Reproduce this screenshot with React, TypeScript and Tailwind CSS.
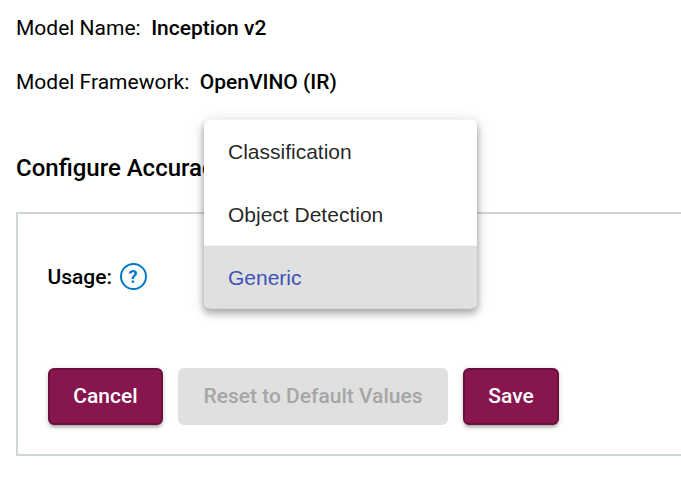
const options = ["Classification", "Object Detection", "Generic"];

function Detail({ label, value }: { label: string; value: string }) {
  return (
    <div className="flex h-[54px] items-center gap-[10.5px] whitespace-nowrap">
      <span>{label}</span>
      <span className="font-medium">{value}</span>
    </div>
  );
}

function UsageMenu() {
  return (
    <ul className="absolute left-[204px] top-[120px] w-[273px] [transform:translateY(-0.4px)_scale(1.0001)] overflow-hidden rounded-md bg-white font-['Liberation_Sans',sans-serif] text-[21px] text-black/87 shadow-[0_3px_6px_-1px_rgba(0,0,0,0.2),0_6px_7.5px_0_rgba(0,0,0,0.14),0_1.5px_15px_0_rgba(0,0,0,0.12)]">
      {options.map((option) => (
        <li
          key={option}
          className={
            option === "Generic"
              ? "flex h-[63px] items-center bg-[#e0e0e0] px-6 pt-px text-[#3f51b5]"
              : "flex h-[63px] items-center px-6 pt-px"
          }
        >
          {option}
        </li>
      ))}
    </ul>
  );
}

function PrimaryButton({ children, width }: { children: string; width: string }) {
  return (
    <button
      className={`${width} h-[57px] rounded-md border-2 border-[#6b0f3d] bg-[#87154e] font-medium text-white shadow-[0_4px_3px_-3px_rgba(0,0,0,0.2),0_3px_3px_0_rgba(0,0,0,0.14),0_1px_7px_0_rgba(0,0,0,0.12)]`}
    >
      {children}
    </button>
  );
}

export default function App() {
  return (
    <main className="relative h-[497px] w-full overflow-hidden bg-white pt-0.5 pl-4 font-[Roboto,sans-serif] text-[21px] text-black">
      <Detail label="Model Name:" value="Inception v2" />
      <Detail label="Model Framework:" value="OpenVINO (IR)" />
      <h1 className="mt-[42px] whitespace-nowrap text-2xl leading-8 font-medium">Configure Accuracy</h1>
      <section className="mt-7 h-[244px] border-2 border-r-0 border-[#d0d7d9] pl-[29.5px]">
        <div className="flex h-[125px] items-center gap-[7.5px]">
          <span className="pt-0.5 font-medium">Usage:</span>
          <span className="flex size-[27px] items-center justify-center rounded-full border-2 border-[#0079c8] text-lg leading-none font-bold text-[#0079c8]">
            ?
          </span>
        </div>
        <div className="mt-[29px] ml-[0.5px] flex gap-[15px]">
          <PrimaryButton width="w-[115px]">Cancel</PrimaryButton>
          <button disabled className="h-[57px] w-[270px] rounded-md bg-[#e0e0e0] font-medium text-[#a6a6a6]">
            Reset to Default Values
          </button>
          <PrimaryButton width="w-24">Save</PrimaryButton>
        </div>
      </section>
      <UsageMenu />
    </main>
  );
}
